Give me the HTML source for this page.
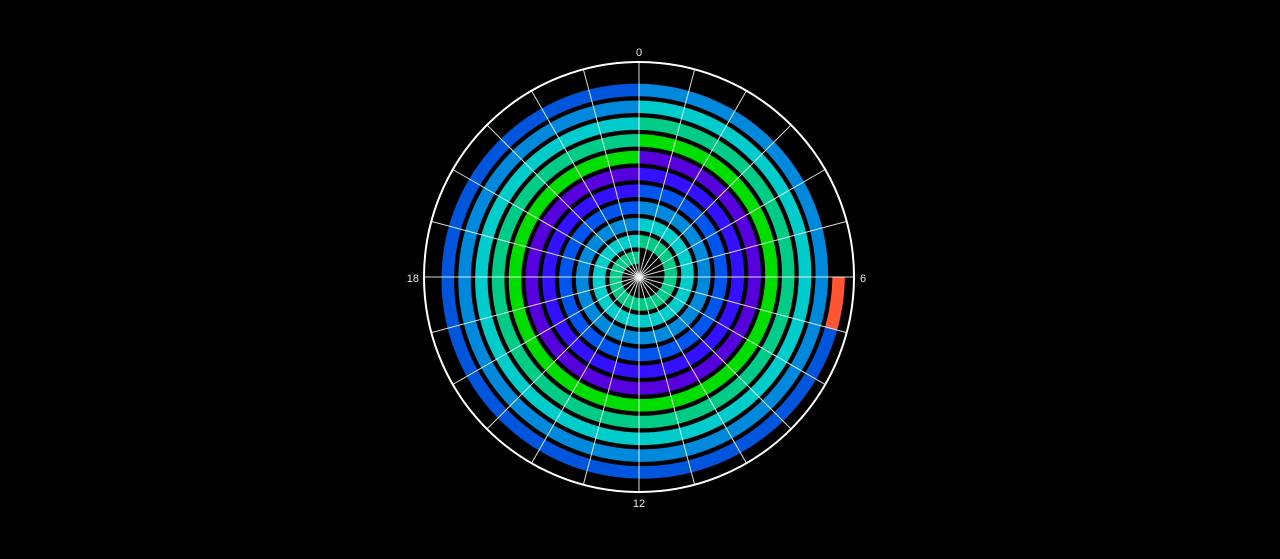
<!DOCTYPE html>
<html><head><meta charset="utf-8"><style>
html,body{margin:0;padding:0;background:#000;width:1280px;height:559px;overflow:hidden}
svg{display:block}
text{font-family:"Liberation Sans",sans-serif;font-size:11px;fill:#e8e8e8}
</style></head><body>
<svg id="s" width="1280" height="559" viewBox="0 0 1280 559">
<g id="rings"></g>
<g id="spokes" stroke="#ffffff" stroke-opacity="0.85" stroke-width="1"></g>
<circle cx="639" cy="277" r="215" fill="none" stroke="#ffffff" stroke-width="2"/>
<text x="639" y="56" text-anchor="middle">0</text>
<text x="860" y="282" text-anchor="start">6</text>
<text x="639" y="507" text-anchor="middle">12</text>
<text x="419" y="282" text-anchor="end">18</text>
</svg>
<script>
(function(){
var NS="http://www.w3.org/2000/svg",cx=639,cy=277,r0=19,P=16.8,W=12.5;
var C=["#00cc88","#00cccc","#0088dd","#0055ee","#3311ff","#5500dd","#00dd00","#00cc88","#00cccc","#0088dd","#0055dd"];
var rings=document.getElementById("rings");
for(var k=0;k<11;k++){
 for(var h=0;h<24;h++){
  var col=C[k];
  if(k==10){ if(h<6) continue; if(h==6) col="#ff5533"; }
  var t1=1-(h+1)/24,t2=1-h/24,pts=[];
  for(var i=0;i<=12;i++){
   var t=t1+(t2-t1)*i/12, r=r0+P*(k+t), a=2*Math.PI*t;
   pts.push((cx-r*Math.sin(a)).toFixed(2)+","+(cy-r*Math.cos(a)).toFixed(2));
  }
  var p=document.createElementNS(NS,"polyline");
  p.setAttribute("points",pts.join(" "));
  p.setAttribute("fill","none");p.setAttribute("stroke",col);p.setAttribute("stroke-width",W);
  rings.appendChild(p);
 }
}
var sp=document.getElementById("spokes");
for(var h=0;h<24;h++){
 var a=h*Math.PI/12,l=document.createElementNS(NS,"line");
 l.setAttribute("x1",cx);l.setAttribute("y1",cy);
 l.setAttribute("x2",(cx+215*Math.sin(a)).toFixed(2));l.setAttribute("y2",(cy-215*Math.cos(a)).toFixed(2));
 sp.appendChild(l);
}
})();
</script>
</body></html>
